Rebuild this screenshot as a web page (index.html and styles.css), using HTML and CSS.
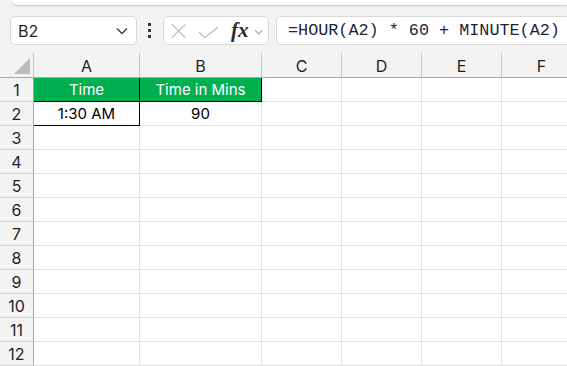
FILE: index.html
```html
<!DOCTYPE html>
<html>
<head>
    <meta charset="utf-8">
    <title>Time in Mins</title>
    <link rel="stylesheet" href="styles.css">
</head>
<body>
<!--top strip-->
<div class="top-strip"></div>
<!--formula bar-->
<div class="toolbar">
    <div class="name-box">
        <span>B2</span>
        <svg class="name-arrow" width="12" height="8" viewBox="0 0 12 8"><path d="M1 1.5 L6 6.5 L11 1.5" fill="none" stroke="#3a3a3a" stroke-width="1.3"/></svg>
    </div>
    <div class="dots"><i></i><i></i><i></i></div>
    <div class="fx-box">
        <svg width="16" height="16" viewBox="0 0 16 16"><path d="M1 1 L15 15 M15 1 L1 15" stroke="#b9b9b9" stroke-width="1.3" fill="none"/></svg>
        <svg class="check" width="22" height="13" viewBox="0 0 22 13"><path d="M1 6 L7 12 L21 1" stroke="#b9b9b9" stroke-width="1.3" fill="none"/></svg>
        <span class="fx">fx</span>
        <svg class="fx-arrow" width="10" height="6" viewBox="0 0 10 6"><path d="M1 1 L5 5 L9 1" fill="none" stroke="#a9a9a9" stroke-width="1.2"/></svg>
    </div>
    <div class="formula">=HOUR(A2) * 60 + MINUTE(A2)</div>
</div>
<!--sheet-->
<div class="sheet">
    <div class="corner"><svg width="16" height="16" viewBox="0 0 16 16"><path d="M16 0 L16 16 L0 16 Z" fill="#bcbcbc"/></svg></div>
    <div class="col-head">A</div>
    <div class="col-head">B</div>
    <div class="col-head">C</div>
    <div class="col-head">D</div>
    <div class="col-head">E</div>
    <div class="col-head">F</div>

    <div class="row-head">1</div>
    <div class="cell head-cell boxed">Time</div>
    <div class="cell head-cell boxed">Time in Mins</div>
    <div class="cell"></div><div class="cell"></div><div class="cell"></div><div class="cell"></div>

    <div class="row-head">2</div>
    <div class="cell boxed">1:30 AM</div>
    <div class="cell">90</div>
    <div class="cell"></div><div class="cell"></div><div class="cell"></div><div class="cell"></div>

    <div class="row-head">3</div>
    <div class="cell"></div><div class="cell"></div><div class="cell"></div><div class="cell"></div><div class="cell"></div><div class="cell"></div>
    <div class="row-head">4</div>
    <div class="cell"></div><div class="cell"></div><div class="cell"></div><div class="cell"></div><div class="cell"></div><div class="cell"></div>
    <div class="row-head">5</div>
    <div class="cell"></div><div class="cell"></div><div class="cell"></div><div class="cell"></div><div class="cell"></div><div class="cell"></div>
    <div class="row-head">6</div>
    <div class="cell"></div><div class="cell"></div><div class="cell"></div><div class="cell"></div><div class="cell"></div><div class="cell"></div>
    <div class="row-head">7</div>
    <div class="cell"></div><div class="cell"></div><div class="cell"></div><div class="cell"></div><div class="cell"></div><div class="cell"></div>
    <div class="row-head">8</div>
    <div class="cell"></div><div class="cell"></div><div class="cell"></div><div class="cell"></div><div class="cell"></div><div class="cell"></div>
    <div class="row-head">9</div>
    <div class="cell"></div><div class="cell"></div><div class="cell"></div><div class="cell"></div><div class="cell"></div><div class="cell"></div>
    <div class="row-head">10</div>
    <div class="cell"></div><div class="cell"></div><div class="cell"></div><div class="cell"></div><div class="cell"></div><div class="cell"></div>
    <div class="row-head">11</div>
    <div class="cell"></div><div class="cell"></div><div class="cell"></div><div class="cell"></div><div class="cell"></div><div class="cell"></div>
    <div class="row-head">12</div>
    <div class="cell"></div><div class="cell"></div><div class="cell"></div><div class="cell"></div><div class="cell"></div><div class="cell"></div>
</div>
</body>
</html>
```

FILE: styles.css
```css
body{
    margin: 0;
    background: #f3f3f3;
    font-family: Inter, "Liberation Sans", sans-serif;
    color: #1f1f1f;
    overflow: hidden;
}
*{box-sizing: border-box;}
.top-strip{
    height: 5px;
    margin-left: 12px;
    background: #fff;
    border-bottom-left-radius: 6px;
    box-shadow: 0 1px 2px rgba(0,0,0,.18);
}
.toolbar{
    display: flex;
    align-items: center;
    height: 29px;
    margin-top: 11px;
    padding-left: 10px;
    overflow: hidden;
}
.toolbar > *{flex-shrink: 0;}
.name-box{
    display: flex;
    align-items: center;
    justify-content: space-between;
    width: 127px;
    height: 29px;
    padding: 0 8px 0 7px;
    background: #fff;
    border: 1px solid #d9d9d9;
    border-radius: 5px;
    font-size: 16px;
}
.dots{
    display: flex;
    flex-direction: column;
    gap: 3px;
    margin: 0 12px 0 11px;
}
.dots i{
    display: block;
    width: 3px;
    height: 3px;
    background: #333;
}
.fx-box{
    display: flex;
    align-items: center;
    width: 106px;
    height: 29px;
    padding: 0 5px 0 7px;
    background: #fff;
    border: 1px solid #d9d9d9;
    border-radius: 5px;
}
.fx-box .check{margin: 3px 0 0 12px;}
.fx{
    margin-left: 12px;
    font-family: "Liberation Serif", serif;
    font-style: italic;
    font-weight: bold;
    font-size: 21px;
    color: #2b2b2b;
}
.fx-arrow{margin: 2px 0 0 5px;}
.formula{
    width: 320px;
    height: 29px;
    margin-left: 7px;
    padding-left: 11px;
    display: flex;
    align-items: center;
    background: #fff;
    border: 1px solid #d9d9d9;
    border-radius: 5px;
    font-family: "Liberation Mono", monospace;
    font-size: 16.8px;
    color: #1f1f3a;
    white-space: nowrap;
}
.sheet{
    display: grid;
    grid-template-columns: 34px 106px 122px 80px 80px 80px 80px;
    grid-template-rows: 25px;
    grid-auto-rows: 24px;
    margin-top: 8px;
    font-size: 15px;
    overflow: hidden;
}
.corner{
    display: flex;
    align-items: flex-end;
    justify-content: flex-end;
    padding: 0 3px 3px 0;
    border-right: 1px solid #c6c6c6;
    border-bottom: 1px solid #a8a8a8;
}
.col-head{
    display: flex;
    align-items: center;
    justify-content: center;
    padding-top: 1px;
    font-size: 16px;
    border-right: 1px solid #c6c6c6;
    border-bottom: 1px solid #a8a8a8;
}
.row-head{
    display: flex;
    align-items: center;
    justify-content: center;
    font-size: 16px;
    border-right: 1px solid #a8a8a8;
    border-bottom: 1px solid #d4d4d4;
}
.cell{
    display: flex;
    align-items: center;
    justify-content: center;
    background: #fff;
    color: #000;
    border-right: 1px solid #e1e1e1;
    border-bottom: 1px solid #e1e1e1;
}
.head-cell{
    background: #00b050;
    color: #fff;
}
.boxed{
    border-right-color: #000;
    border-bottom-color: #000;
}
```
